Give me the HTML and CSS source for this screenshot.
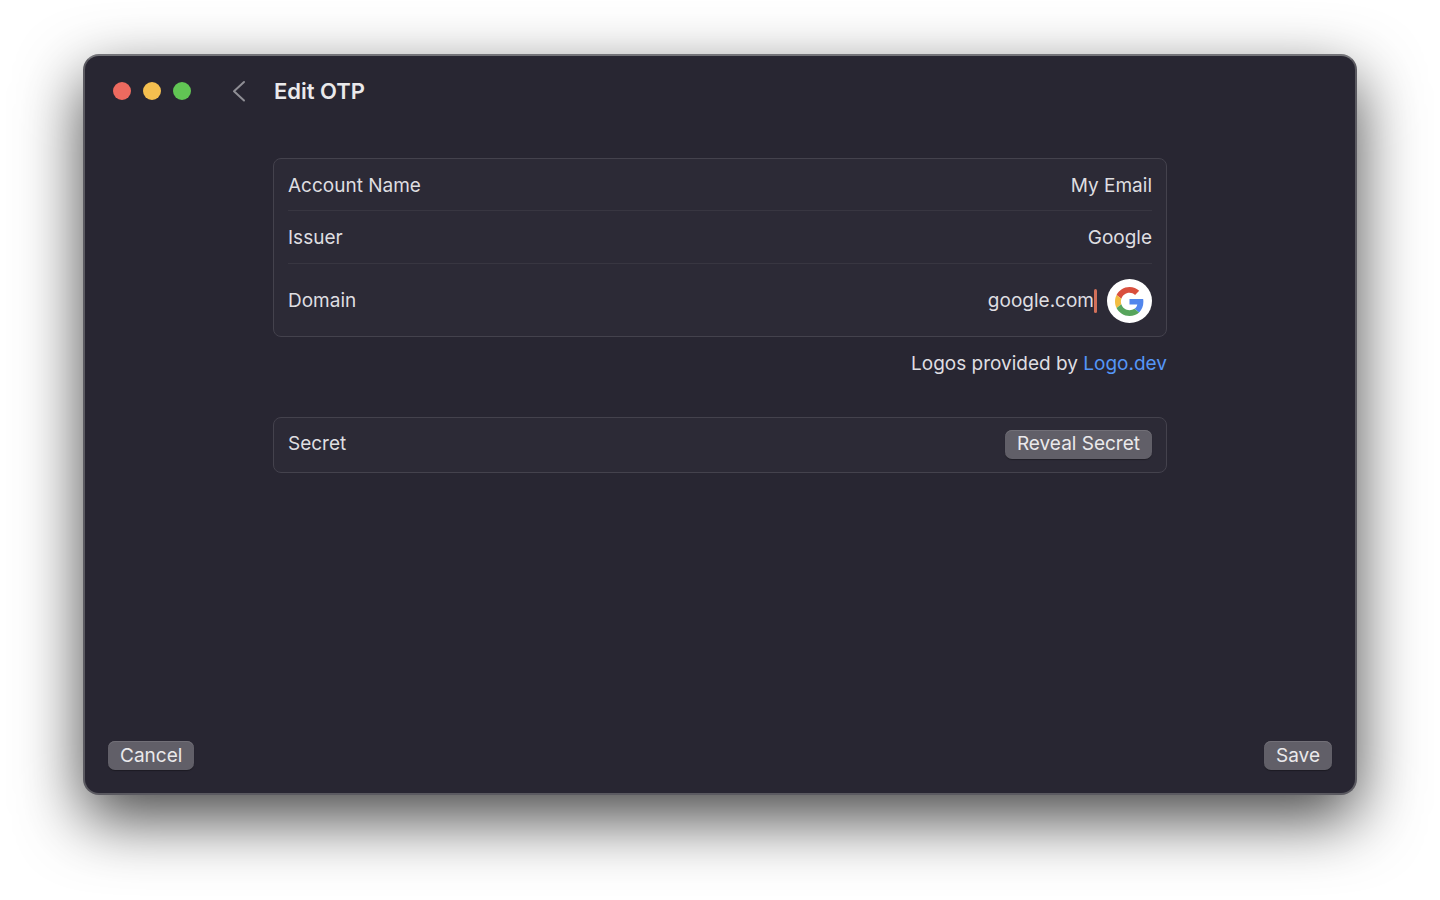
FILE: index.html
```
<!DOCTYPE html>
<html lang="en">
<head>
<meta charset="utf-8">
<meta name="viewport" content="width=device-width, initial-scale=1">
<title>Edit OTP</title>
<link rel="stylesheet" href="styles.css">
</head>
<body>
<main class="window">
  <header class="titlebar">
    <div class="traffic">
      <button class="light light-close" type="button" aria-label="Close"></button>
      <button class="light light-minimize" type="button" aria-label="Minimize"></button>
      <button class="light light-zoom" type="button" aria-label="Zoom"></button>
    </div>
    <button class="back" type="button" aria-label="Back">
      <svg width="14" height="22" viewBox="0 0 14 22" fill="none" stroke="currentColor" stroke-width="2" stroke-linecap="round" stroke-linejoin="round"><path d="M12 2 2 11.300 12 20.500"/></svg>
    </button>
    <h1 class="title">Edit OTP</h1>
  </header>
  <form class="form">
    <div class="content">
      <section class="card">
        <div class="row row-first">
          <label class="label" for="account">Account Name</label>
          <input class="field" id="account" type="text" value="My Email">
        </div>
        <div class="row">
          <label class="label" for="issuer">Issuer</label>
          <input class="field" id="issuer" type="text" value="Google">
        </div>
        <div class="row row-domain">
          <label class="label" for="domain">Domain</label>
          <input class="field" id="domain" type="text" value="google.com">
          <span class="caret"></span>
          <span class="logo">
            <svg width="29" height="29" viewBox="0 0 48 48" aria-hidden="true">
              <path fill="#d94f3d" d="M24 9.500c3.540 0 6.710 1.220 9.210 3.600l6.850-6.850C35.900 2.380 30.470 0 24 0 14.620 0 6.510 5.380 2.560 13.220l7.980 6.190C12.430 13.720 17.740 9.500 24 9.500z"/>
              <path fill="#5186ec" d="M46.980 24.550c0-1.570-.15-3.090-.38-4.550H24v9.020h12.940c-.58 2.960-2.260 5.480-4.780 7.180l7.730 6c4.510-4.180 7.090-10.360 7.090-17.650z"/>
              <path fill="#f2bd42" d="M10.530 28.590c-.48-1.450-.76-2.990-.76-4.590s.27-3.140.76-4.590l-7.980-6.190C.92 16.460 0 20.120 0 24c0 3.880.92 7.540 2.560 10.780l7.970-6.190z"/>
              <path fill="#57a55c" d="M24 48c6.480 0 11.930-2.130 15.890-5.810l-7.730-6c-2.150 1.450-4.920 2.300-8.160 2.300-6.260 0-11.570-4.220-13.470-9.910l-7.980 6.190C6.510 42.620 14.620 48 24 48z"/>
            </svg>
          </span>
        </div>
      </section>
      <p class="credit">Logos provided by <a class="link" href="#">Logo.dev</a></p>
      <section class="card">
        <div class="row row-secret">
          <span class="label">Secret</span>
          <button class="button" type="button">Reveal Secret</button>
        </div>
      </section>
    </div>
    <footer class="actions">
      <button class="button" type="button">Cancel</button>
      <button class="button" type="submit">Save</button>
    </footer>
  </form>
</main>
</body>
</html>
```
FILE: styles.css
```
* {
  box-sizing: border-box;
}

body {
  display: flex;
  min-height: 100vh;
  margin: 0;
  padding: 54px 83px 105px;
  background: #fff;
  color: #dfdee1;
  font: 19px/24px Inter, "Liberation Sans", sans-serif;
}

button,
input {
  margin: 0;
  border: 0;
  color: inherit;
  font: inherit;
}

.window {
  display: flex;
  flex: 1;
  flex-direction: column;
  min-width: 0;
  border: 2px solid #5b5a61;
  border-top-color: #737378;
  border-radius: 16px;
  background: #282632;
  box-shadow: 0 24px 64px rgba(0, 0, 0, 0.72);
}

.titlebar {
  display: flex;
  align-items: center;
  height: 70px;
  padding: 0 28px;
}

.traffic {
  display: flex;
  gap: 12px;
}

.light {
  width: 18px;
  height: 18px;
  padding: 0;
  border-radius: 50%;
}

.light-close {
  background: #ed6a5f;
}

.light-minimize {
  background: #f5bf4f;
}

.light-zoom {
  background: #61c554;
}

.back {
  display: flex;
  margin-left: 41px;
  padding: 0;
  background: none;
  color: #8f8e95;
}

.title {
  margin: 0 0 0 28px;
  color: #eae9eb;
  font-size: 22px;
  font-weight: 600;
}

.form {
  display: flex;
  flex: 1;
  flex-direction: column;
}

.content {
  flex: 1;
  padding: 32px 188px;
}

.card {
  padding: 0 14px;
  border: 1px solid #44424d;
  border-radius: 8px;
  background: #2c2a36;
}

.row {
  display: flex;
  align-items: center;
  min-height: 53px;
  padding-top: 2px;
}

.row + .row {
  border-top: 1px solid #383641;
}

.row-first {
  min-height: 51px;
}

.row-domain {
  min-height: 73px;
}

.row-secret {
  min-height: 54px;
  padding: 0 0 2px;
}

.label {
  flex: 1;
}

.field {
  flex: 1;
  min-width: 0;
  padding: 0;
  outline: 0;
  background: none;
  text-align: right;
}

.caret {
  width: 3px;
  height: 24px;
  border-radius: 2px;
  background: #d2705a;
}

.logo {
  display: grid;
  place-items: center;
  width: 45px;
  height: 44px;
  margin-left: 10px;
  border-radius: 50%;
  background: #fff;
}

.credit {
  margin: 15px 0 41px;
  text-align: right;
}

.link {
  color: #5596f7;
  text-decoration: none;
}

.button {
  height: 29px;
  padding: 0 12px;
  border-radius: 7px;
  background: #615f68;
  box-shadow: inset 0 1px 0 #716f77, 0 1px 1px rgba(0, 0, 0, 0.3);
  color: #eae9eb;
  line-height: 28px;
}

.actions {
  display: flex;
  justify-content: space-between;
  padding: 0 23px 23px;
}
```
